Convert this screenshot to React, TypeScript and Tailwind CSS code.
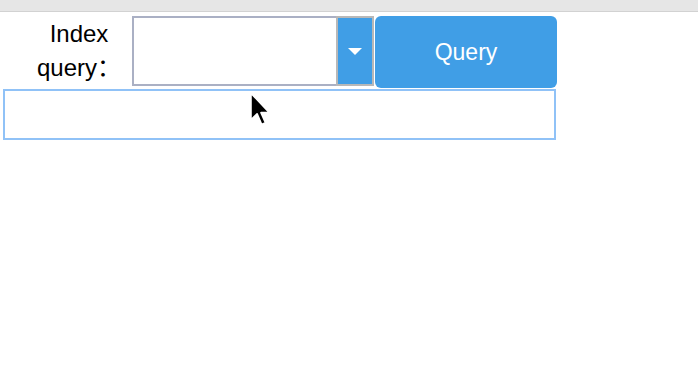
import React from 'react'

function Cursor() {
  return (
    <svg className="absolute left-[248px] top-[92px]" width="26" height="38" viewBox="0 0 22 34">
      <path d="M2 1 L2 25 L7.5 19.5 L11.5 29 L15 27.5 L11 18.5 L18.5 18.5 Z" fill="#000" stroke="#fff" strokeWidth="1.5" strokeLinejoin="round" />
    </svg>
  )
}

export default function App() {
  return (
    <div className="relative w-[698px] h-[390px] bg-white font-['Liberation_Sans','Noto_Sans_CJK_SC',sans-serif] text-black">
      {/* browser strip */}
      <div className="h-[12px] bg-[#e6e6e6] border-b border-[#d2d2d2]" />

      <div className="flex items-start pt-[4px]">
        <div className="w-[132px] pl-[26px] pt-[1px] text-center text-[24px] leading-[34px]">
          Index
          <br />
          query：
        </div>

        {/* select */}
        <div className="flex h-[70px] w-[242px] border-2 border-[#aab0c4]">
          <div className="flex-1 bg-white" />
          <div className="-my-[2px] -mr-[2px] flex w-[38px] items-center justify-center border-2 border-[#b8b8b8] bg-[#409ee6]">
            <svg width="16" height="9" viewBox="0 0 16 9">
              <path d="M1 1 L15 1 L8 8 Z" fill="#fff" />
            </svg>
          </div>
        </div>

        <button className="ml-[1px] flex h-[72px] w-[182px] items-center justify-center rounded-[6px] bg-[#409ee6] text-[23px] text-white">
          Query
        </button>
      </div>

      <div className="ml-[3px] mt-[1px] h-[51px] w-[553px] border-2 border-[#90c2f7]" />

      <Cursor />
    </div>
  )
}
